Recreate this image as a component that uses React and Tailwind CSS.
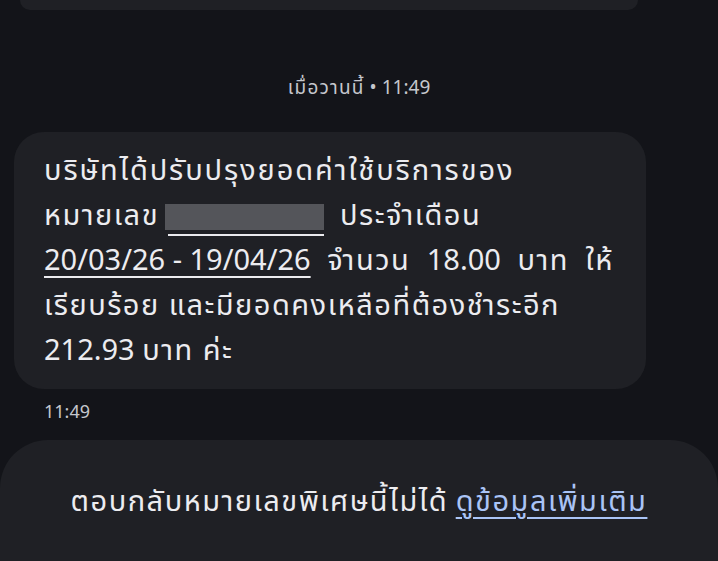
import React from "react";

const Th = ({ children }) => <span className="tracking-[1.5px]">{children}</span>;

const App = () => {
  return (
    <div
      className="w-[718px] h-[561px] bg-[#131419] overflow-hidden flex flex-col text-[#e6e6ea]"
      style={{ fontFamily: '"Noto Sans Thai", "Noto Sans", "DejaVu Sans", sans-serif' }}
    >
      <div className="mx-[20px] h-[10px] shrink-0 bg-[#1f2025] rounded-b-[28px] w-[618px]" />

      <div className="h-[67px] shrink-0" />
      <p className="text-center text-[19px] leading-[24px] text-[#c5c7cd]">
        <span className="tracking-[1.2px]">เมื่อวานนี้</span> • 11:49
      </p>

      <div className="mt-[31px] ml-[14px] w-[632px] bg-[#1f2025] rounded-[30px] pl-[30px] pr-[20px] pt-[17px] pb-[15px] text-[29px] leading-[45px] text-[#ececf0] whitespace-nowrap">
        <p className="tracking-[1.9px]">บริษัทได้ปรับปรุงยอดค่าใช้บริการของ</p>
        <p className="flex items-center">
          <Th>หมายเลข</Th>
          <span className="relative ml-[6px] mr-[16px] w-[159px] h-[26px] bg-[#54555a]">
            <span className="absolute left-[3px] right-0 -bottom-[6px] h-[2px] bg-[#eaeaee]" />
          </span>
          <Th>ประจำเดือน</Th>
        </p>
        <p className="[word-spacing:9px]">
          <span className="underline underline-offset-[6px] decoration-2 [word-spacing:0px]">20/03/26 - 19/04/26</span>{" "}
          <Th>จำนวน</Th> 18.00 <Th>บาท</Th> <Th>ให้</Th>
        </p>
        <p><Th>เรียบร้อย และมียอดคงเหลือที่ต้องชำระอีก</Th></p>
        <p>
          212.93 <Th>บาท ค่ะ</Th>
        </p>
      </div>

      <p className="mt-[12px] ml-[44px] text-[18px] leading-[24px] text-[#c5c7cd]">11:49</p>

      <div className="mt-[15px] flex-1 bg-[#1f2025] rounded-t-[48px] flex justify-center pt-[45px]">
        <p className="text-[29px] leading-[34px] text-[#ececf0] whitespace-nowrap">
          <Th>ตอบกลับหมายเลขพิเศษนี้ไม่ได้</Th>{" "}
          <span className="text-[#aac4f6] underline underline-offset-[6px] decoration-2 tracking-[1.5px]">ดูข้อมูลเพิ่มเติม</span>
        </p>
      </div>
    </div>
  );
};

export default App;
